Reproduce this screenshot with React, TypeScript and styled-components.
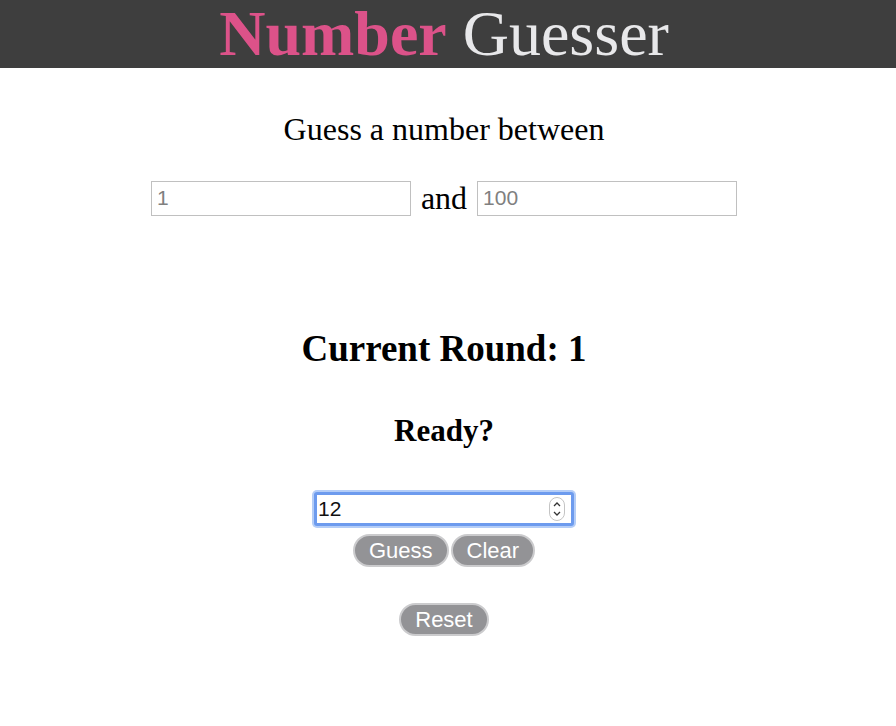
import styled, { createGlobalStyle } from "styled-components"

const GlobalStyle = createGlobalStyle`
    body {
        margin: 0;
        background: #fff;
        font-family: "Liberation Serif", "Times New Roman", serif;
    }
`

const Header = styled.header`
    height: 68px;
    padding-right: 8px;
    background-color: #3e3e3e;
    display: flex;
    justify-content: center;
    align-items: center;
`

const Title = styled.h1`
    margin: 0;
    font-size: 64px;
    font-weight: normal;
    line-height: 68px;
    color: #e8e8ea;
`

const Accent = styled.span`
    color: #dc5289;
    font-weight: bold;
`

const Main = styled.main`
    display: flex;
    flex-direction: column;
    align-items: center;
    padding-right: 8px;
`

const Prompt = styled.p`
    margin: 43px 0 0;
    font-size: 32px;
    line-height: 36px;
`

const RangeRow = styled.div`
    display: flex;
    align-items: center;
    gap: 10px;
    margin-top: 33px;
    font-size: 32px;
    line-height: 36px;
`

const RangeInput = styled.input`
    box-sizing: border-box;
    width: 260px;
    height: 35px;
    border: 1px solid #c0c0c0;
    padding: 0 5px;
    font-family: "Liberation Sans", Arial, sans-serif;
    font-size: 21px;
    &::placeholder {
        color: #808080;
    }
`

const Round = styled.h2`
    margin: 111px 0 0;
    font-size: 37px;
    line-height: 44px;
`

const Status = styled.h3`
    margin: 42px 0 0;
    font-size: 31px;
    line-height: 36px;
`

const GuessField = styled.div`
    position: relative;
    margin-top: 43px;
`

const GuessInput = styled.input`
    box-sizing: border-box;
    width: 260px;
    height: 34px;
    padding: 0 1px;
    border: 3px solid #6d9bee;
    border-radius: 3px;
    box-shadow: 0 0 0 2px #b4cdf7;
    outline: none;
    font-family: "Liberation Sans", Arial, sans-serif;
    font-size: 21px;
    color: #111;
    caret-color: #000;
`

const Spinner = styled.svg`
    position: absolute;
    right: 9px;
    top: 5px;
    pointer-events: none;
`

const ButtonRow = styled.div`
    display: flex;
    gap: 2px;
    margin-top: 8px;
`

const PillButton = styled.button<{ $top?: number }>`
    margin-top: ${(p) => p.$top ?? 0}px;
    height: 33px;
    padding: 0 14px;
    border: 2px solid #cbcbcd;
    border-radius: 17px;
    background-color: #939396;
    color: #fff;
    font-family: "Liberation Sans", Arial, sans-serif;
    font-size: 22px;
    line-height: 1;
`

export default function App() {
    return (
        <>
            <GlobalStyle />
            <Header>
                <Title>
                    <Accent>Number</Accent> Guesser
                </Title>
            </Header>
            <Main>
                <Prompt>Guess a number between</Prompt>
                <RangeRow>
                    <RangeInput type="text" placeholder="1" />
                    and
                    <RangeInput type="text" placeholder="100" />
                </RangeRow>
                <Round>Current Round: 1</Round>
                <Status>Ready?</Status>
                <GuessField>
                    <GuessInput type="text" defaultValue="12" autoFocus />
                    <Spinner width="16" height="24" viewBox="0 0 16 24">
                        <rect x="0.5" y="0.5" width="15" height="23" rx="7.5" fill="#fff" stroke="#c4c4c4" />
                        <path d="M5 9 L8 6 L11 9" fill="none" stroke="#333" strokeWidth="1.3" />
                        <path d="M5 15 L8 18 L11 15" fill="none" stroke="#333" strokeWidth="1.3" />
                    </Spinner>
                </GuessField>
                <ButtonRow>
                    <PillButton>Guess</PillButton>
                    <PillButton>Clear</PillButton>
                </ButtonRow>
                <PillButton $top={36}>Reset</PillButton>
            </Main>
        </>
    )
}
